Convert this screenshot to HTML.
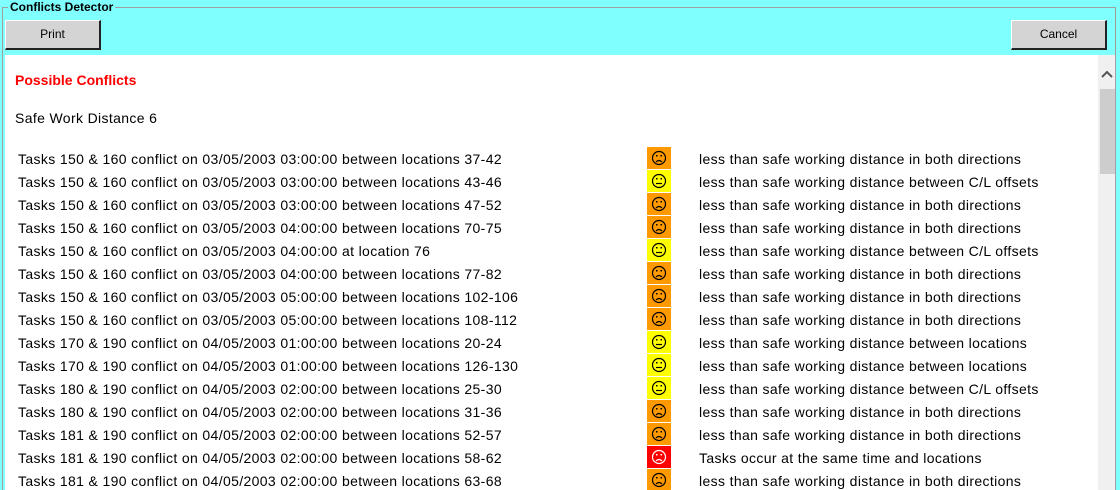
<!DOCTYPE html>
<html style="margin:0;width:1120px;height:490px;overflow:hidden"><head><style>
body{margin:0;width:1120px;height:490px;overflow:hidden;background:#80ffff;font-family:"Liberation Sans",Tahoma,sans-serif;position:relative}
.fs{position:absolute;left:2px;top:7px;width:1112px;height:500px;border:1px solid #a0a0a0;border-bottom:none}
.lg{position:absolute;left:8px;top:0;font-size:12px;font-weight:bold;background:#80ffff;padding:0 2px;line-height:14px;color:#000}
.btn{position:absolute;top:20px;width:93px;height:27px;background:#d4d4d4;border:1px solid #fff;border-right:2px solid #222;border-bottom:2px solid #222;font-size:12px;text-align:center;line-height:27px;box-sizing:content-box}
.ct{position:absolute;left:5px;top:55px;width:1093px;height:435px;background:#fff}
.sb{position:absolute;left:1098px;top:55px;width:17px;height:435px;background:#f0f0f0}
.th{position:absolute;left:1100px;top:89px;width:15px;height:85px;background:#cdcdcd}
.t{position:absolute;font-size:14px;line-height:16px;white-space:nowrap;color:#000;letter-spacing:0.36px}
.ic{position:absolute;left:647px;width:24px;height:22px}
</style></head><body>
<div class="fs"></div>
<div class="lg">Conflicts Detector</div>
<div class="btn" style="left:5px">Print</div>
<div class="btn" style="left:1011px">Cancel</div>
<div class="ct"></div>
<div class="sb"></div><div class="th"></div>
<svg style="position:absolute;left:1100px;top:69px" width="14" height="10"><path d="M2 8 L7 3 L12 8" stroke="#555" stroke-width="2" fill="none"/></svg>
<div class="t" style="left:15px;top:72px;color:#f00;font-weight:bold;letter-spacing:0">Possible Conflicts</div>
<div class="t" style="left:15px;top:110px">Safe Work Distance 6</div>
<div id="rows"></div>
<script>
var R=[
["Tasks 150 & 160 conflict on 03/05/2003 03:00:00 between locations 37-42","o","less than safe working distance in both directions"],
["Tasks 150 & 160 conflict on 03/05/2003 03:00:00 between locations 43-46","y","less than safe working distance between C/L offsets"],
["Tasks 150 & 160 conflict on 03/05/2003 03:00:00 between locations 47-52","o","less than safe working distance in both directions"],
["Tasks 150 & 160 conflict on 03/05/2003 04:00:00 between locations 70-75","o","less than safe working distance in both directions"],
["Tasks 150 & 160 conflict on 03/05/2003 04:00:00 at location 76","y","less than safe working distance between C/L offsets"],
["Tasks 150 & 160 conflict on 03/05/2003 04:00:00 between locations 77-82","o","less than safe working distance in both directions"],
["Tasks 150 & 160 conflict on 03/05/2003 05:00:00 between locations 102-106","o","less than safe working distance in both directions"],
["Tasks 150 & 160 conflict on 03/05/2003 05:00:00 between locations 108-112","o","less than safe working distance in both directions"],
["Tasks 170 & 190 conflict on 04/05/2003 01:00:00 between locations 20-24","y","less than safe working distance between locations"],
["Tasks 170 & 190 conflict on 04/05/2003 01:00:00 between locations 126-130","y","less than safe working distance between locations"],
["Tasks 180 & 190 conflict on 04/05/2003 02:00:00 between locations 25-30","y","less than safe working distance between C/L offsets"],
["Tasks 180 & 190 conflict on 04/05/2003 02:00:00 between locations 31-36","o","less than safe working distance in both directions"],
["Tasks 181 & 190 conflict on 04/05/2003 02:00:00 between locations 52-57","o","less than safe working distance in both directions"],
["Tasks 181 & 190 conflict on 04/05/2003 02:00:00 between locations 58-62","r","Tasks occur at the same time and locations"],
["Tasks 181 & 190 conflict on 04/05/2003 02:00:00 between locations 63-68","o","less than safe working distance in both directions"]];
var h="";
R.forEach(function(r,i){var top=147+23*i;
var bg=r[1]=="o"?"#ff9900":r[1]=="y"?"#ffff00":"#ff0000";
var st=r[1]=="r"?"#fff":"#000";
var m=r[1]=="y"?'<path d="M9 13.5 H15" stroke="'+st+'" stroke-width="1.2"/>':'<path d="M9 15 Q12 12 15 15" stroke="'+st+'" stroke-width="1.2" fill="none"/>';
var t=r[0].replace(/&/g,"&amp;");
h+='<div class="t" style="left:18px;top:'+(top+4)+'px">'+t+'</div>';
h+='<svg class="ic" style="top:'+top+'px;background:'+bg+'" width="24" height="22"><circle cx="12" cy="11" r="6.5" stroke="'+st+'" stroke-width="1.2" fill="none"/><rect x="9" y="8" width="1.5" height="1.5" fill="'+st+'"/><rect x="13.5" y="8" width="1.5" height="1.5" fill="'+st+'"/>'+m+'</svg>';
h+='<div class="t" style="left:699px;top:'+(top+4)+'px">'+r[2]+'</div>';});
document.getElementById("rows").innerHTML=h;
</script>
</body></html>
